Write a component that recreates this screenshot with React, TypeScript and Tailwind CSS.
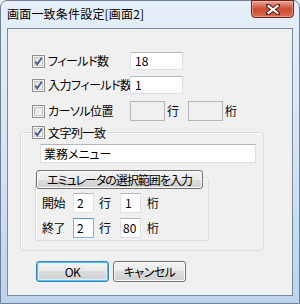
import React from "react";

const font = "[font-family:'Noto_Sans_CJK_JP','Noto_Sans',sans-serif] [font-feature-settings:'palt']";

function Check({ checked }: { checked: boolean }) {
  return (
    <svg width="13" height="13" viewBox="0 0 13 13" className="shrink-0">
      <defs>
        <linearGradient id="cbg" x1="0" y1="0" x2="1" y2="1">
          <stop offset="0" stopColor="#dcdcdc" />
          <stop offset="1" stopColor="#fbfbfb" />
        </linearGradient>
      </defs>
      <rect x="0.5" y="0.5" width="12" height="12" fill="#f4f4f4" stroke="#8e8f8f" />
      <rect x="2.5" y="2.5" width="8" height="8" fill="url(#cbg)" stroke="#c7c7c7" />
      {checked && (
        <path d="M3.2 6.6 L5.3 9.3 L9.8 2.8" fill="none" stroke="#3f5a9a" strokeWidth="1.8" />
      )}
    </svg>
  );
}

function TextBox({ w, h, value, disabled, focus, pl = 4 }: { w: number; h: number; value?: string; disabled?: boolean; focus?: boolean; pl?: number }) {
  const cls = disabled
    ? "bg-[#f0f0f0] border border-[#b6b6b6]"
    : focus
    ? "bg-white border border-[#7fb4dd] border-t-[#5a9bd1]"
    : "bg-white border border-[#dbdfe6] border-t-[#b1b5bc]";
  return (
    <div style={{ width: w, height: h, paddingLeft: pl }} className={`${cls} flex items-center text-[12px] text-black leading-none shrink-0 tracking-normal`}>
      {value}
    </div>
  );
}

export default function App() {
  return (
    <div className={`${font} w-[300px] h-[304px] overflow-hidden bg-[#f0f0f0]`}>
      <div className="w-[300px] h-[304px] rounded-t-[7px] border border-[#6f8299] bg-gradient-to-b from-[#e6eff9] via-[#d5e4f3] to-[#bcd4ec] flex flex-col">
        {/* title bar */}
        <div className="h-[27px] flex items-start justify-between shrink-0">
          <div className="pl-[6px] pt-[6px] text-[12px] leading-[14px] text-black tracking-[0.2px]">
            画面一致条件設定[画面2]
          </div>
          <div className="mr-[5px] w-[43px] h-[18px] -mt-px rounded-b-[4px] border border-[#6b2318] bg-gradient-to-b from-[#e8a597] via-[#cc4a33] to-[#d86a4c] flex items-center justify-center shadow-[inset_0_0_0_1px_rgba(255,200,190,0.5)]">
            <svg width="14" height="11" viewBox="0 0 14 11">
              <path d="M2 1.5 L12 9.5 M12 1.5 L2 9.5" stroke="#4a1a12" strokeWidth="4" strokeLinecap="square" />
              <path d="M2.5 2 L11.5 9 M11.5 2 L2.5 9" stroke="#ffffff" strokeWidth="2.2" strokeLinecap="square" />
            </svg>
          </div>
        </div>
        {/* client */}
        <div className="ml-[6px] w-[286px] h-[268px] border border-[#7a8a9b] bg-[#f0f0f0] text-[12px] text-black leading-none tracking-[-0.5px] flex flex-col">
          {/* row 1 */}
          <div className="mt-[23px] ml-[24px] h-[18px] flex items-center">
            <div className="w-[98px] flex items-center gap-[3px]">
              <Check checked />
              <span>フィールド数</span>
            </div>
            <TextBox w={53} h={18} value="18" />
          </div>
          {/* row 2 */}
          <div className="mt-[6px] ml-[24px] h-[18px] flex items-center">
            <div className="w-[98px] flex items-center gap-[3px]">
              <Check checked />
              <span className="whitespace-nowrap">入力フィールド数</span>
            </div>
            <TextBox w={53} h={18} value="1" />
          </div>
          {/* row 3 */}
          <div className="mt-[7px] ml-[24px] h-[20px] flex items-center">
            <div className="w-[98px] flex items-center gap-[3px]">
              <Check checked={false} />
              <span>カーソル位置</span>
            </div>
            <TextBox w={35} h={20} disabled />
            <span className="ml-[2px] w-[21px]">行</span>
            <TextBox w={35} h={20} disabled />
            <span className="ml-[2px]">桁</span>
          </div>
          {/* group box */}
          <div className="relative mt-[11px] ml-[12px] w-[244px] h-[119px] rounded-[3px] border border-[#d5dfe5] shadow-[inset_1px_1px_0_#ffffff] flex flex-col">
            <div className="absolute left-[11px] -top-[7px] bg-[#f0f0f0] pr-[2px] flex items-center gap-[3px]">
              <Check checked />
              <span>文字列一致</span>
            </div>
            <div className="mt-[11px] ml-[19px]">
              <TextBox w={216} h={19} value="業務メニュー" pl={3} />
            </div>
            <div className="relative mt-[14px] ml-[14px] w-[174px] h-[64px] rounded-[3px] border border-[#d5dfe5] shadow-[inset_1px_1px_0_#ffffff] flex flex-col">
              <div className="absolute left-0 -top-[8px] w-[167px] h-[19px] rounded-[3px] border border-[#707070] bg-[linear-gradient(to_bottom,#f2f2f2_0%,#ebebeb_50%,#dddddd_50%,#cfcfcf_100%)] shadow-[inset_0_0_0_1px_#fcfcfc] flex items-center justify-center whitespace-nowrap tracking-[-1px]">
                エミュレータの選択範囲を入力
              </div>
              <div className="mt-[15px] ml-[6px] h-[20px] flex items-center">
                <span className="w-[31px]">開始</span>
                <TextBox w={21} h={20} value="2" pl={3} />
                <span className="ml-[5px] w-[21px]">行</span>
                <TextBox w={21} h={20} value="1" pl={4} />
                <span className="ml-[6px]">桁</span>
              </div>
              <div className="mt-[5px] ml-[6px] h-[20px] flex items-center">
                <span className="w-[31px]">終了</span>
                <TextBox w={21} h={20} value="2" pl={3} focus />
                <span className="ml-[5px] w-[21px]">行</span>
                <TextBox w={21} h={20} value="80" pl={2} />
                <span className="ml-[6px]">桁</span>
              </div>
            </div>
          </div>
          {/* buttons */}
          <div className="mt-[10px] ml-[28px] flex gap-[4px]">
            <div className="w-[73px] h-[21px] rounded-[3px] border border-[#3c7fb1] bg-[linear-gradient(to_bottom,#f2f2f2_0%,#ebebeb_50%,#dddddd_50%,#cfcfcf_100%)] shadow-[inset_0_0_0_1px_#48c6f5,inset_0_0_0_2px_#dff2fb] flex items-center justify-center">
              OK
            </div>
            <div className="w-[73px] h-[21px] rounded-[3px] border border-[#707070] bg-[linear-gradient(to_bottom,#f2f2f2_0%,#ebebeb_50%,#dddddd_50%,#cfcfcf_100%)] shadow-[inset_0_0_0_1px_#fcfcfc] flex items-center justify-center">
              キャンセル
            </div>
          </div>
        </div>
      </div>
    </div>
  );
}
